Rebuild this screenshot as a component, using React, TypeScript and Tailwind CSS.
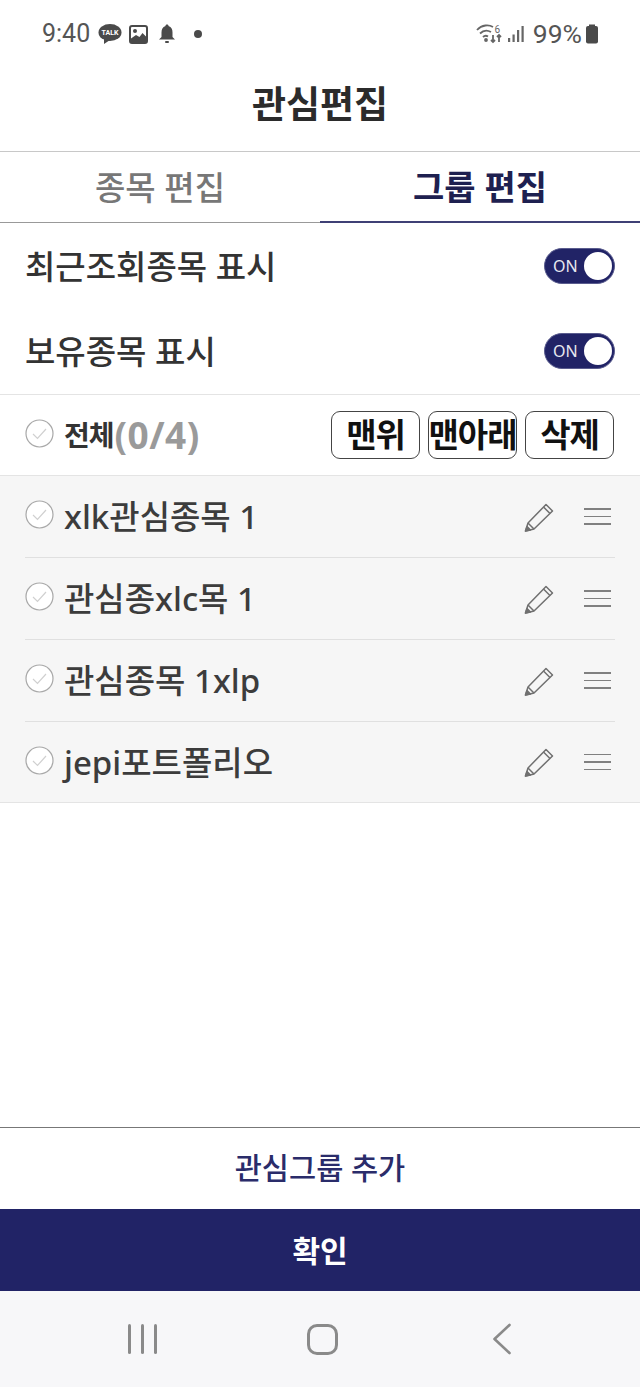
function Toggle() {
  return (
    <div className="-translate-y-[1px]">
      <div className="flex h-[36px] w-[71px] items-center justify-between rounded-full border border-[#5a5c8e] bg-[#212366] pl-[8px] pr-[2px]">
        <span className="text-[16px] leading-none text-[#e8e8f0]">ON</span>
        <span className="h-[28px] w-[28px] rounded-full bg-white"></span>
      </div>
    </div>
  );
}

function CheckCircle() {
  return (
    <svg width="29" height="29" viewBox="0 0 29 29" fill="none" className="-translate-y-[2px]">
      <circle cx="14.5" cy="14.5" r="13.5" stroke="#a8a8a8" strokeWidth="1.2" fill="#ffffff" />
      <path d="M8 15 L12.5 19.5 L21 10" stroke="#d0d0d0" strokeWidth="1.2" />
    </svg>
  );
}

function Pencil() {
  return (
    <svg width="30" height="30" viewBox="0 0 30 30" fill="none" stroke="#707070" strokeWidth="1.5" strokeLinejoin="round">
      <path d="M1.5 29 L4 21 L22 2.5 L28.5 9 L10 27 Z" />
      <path d="M4 21 L10 27" />
      <path d="M19.5 5 L26 11.5" />
      <path d="M1.5 29 L3 24.5 L6.5 28 Z" fill="#707070" />
    </svg>
  );
}

function Menu() {
  return (
    <div className="flex w-[27px] flex-col gap-[6px]">
      <div className="h-[1.5px] bg-[#808080]"></div>
      <div className="h-[1.5px] bg-[#808080]"></div>
      <div className="h-[1.5px] bg-[#808080]"></div>
    </div>
  );
}

function Btn({ label }: { label: string }) {
  return (
    <div className="flex h-[48px] w-[89px] items-center justify-center whitespace-nowrap rounded-[9px] border border-[#444] bg-white text-[33px] font-bold tracking-[-1px] text-[#111]">
      {label}
    </div>
  );
}

function GroupRow({ name, last }: { name: string; last?: boolean }) {
  return (
    <div className={`flex items-center justify-between ${last ? "h-[80px]" : "h-[82px] border-b border-[#e0e0e0]"}`}>
      <div className="flex items-center gap-[10px]">
        <CheckCircle />
        <span className="text-[33px] font-medium leading-none text-[#3c3c3c]">{name}</span>
      </div>
      <div className="flex items-center gap-[30px] pr-[4px]">
        <Pencil />
        <Menu />
      </div>
    </div>
  );
}

function StatusBar() {
  return (
    <div className="flex h-[63px] shrink-0 items-center justify-between pl-[42px] pr-[41px] pt-[5px] font-['Roboto',sans-serif] text-[25px] text-[#555]">
      <div className="flex items-center gap-[8px]">
        <span>9:40</span>
        <svg width="24" height="22" viewBox="0 0 24 22" fill="#4a4a4a">
          <ellipse cx="12" cy="9.5" rx="11.5" ry="8.5" />
          <path d="M6 15 L6 21 L12 17 Z" />
          <text x="12" y="12" fontSize="7" fontWeight="700" fill="#fff" textAnchor="middle" fontFamily="Roboto">TALK</text>
        </svg>
        <svg width="19" height="19" viewBox="0 0 19 19" className="-ml-px">
          <rect x="1" y="1" width="17" height="17" rx="2" fill="#fff" stroke="#4a4a4a" strokeWidth="2" />
          <circle cx="6" cy="6" r="2" fill="#4a4a4a" />
          <path d="M2 13.5 L7 10 L10.5 12 L13.5 8 L17 11.5 L17 17 L2 17 Z" fill="#4a4a4a" />
        </svg>
        <svg width="18" height="20" viewBox="0 0 18 20" fill="#4a4a4a" className="ml-[2px]">
          <path d="M9 0.5 C10 0.5 10.5 1 10.5 2 C13.5 3 14.5 5.5 14.5 8.5 L14.5 13 L17 15.5 L1 15.5 L3.5 13 L3.5 8.5 C3.5 5.5 4.5 3 7.5 2 C7.5 1 8 0.5 9 0.5 Z" />
          <rect x="7" y="17" width="4" height="2" rx="1" />
        </svg>
        <span className="ml-[10px] h-[8px] w-[8px] rounded-full bg-[#4a4a4a]"></span>
      </div>
      <div className="flex items-center">
        <svg width="26" height="20" viewBox="0 0 26 20" fill="none" stroke="#666" strokeWidth="1.8">
          <path d="M1 6 C6 0.5 13 0.5 17 3" />
          <path d="M4 9.5 C7.5 6 11.5 6 15 8" />
          <path d="M7 13 C8.5 11.5 10.5 11.5 12 12.5" />
          <circle cx="10" cy="16" r="1" fill="#666" />
          <path d="M17 11 L17 18 M15 16 L17 18 L19 16" />
          <path d="M23 18 L23 11 M21 13 L23 11 L25 13" />
          <text x="18.5" y="9" fontSize="10" fill="#666" stroke="none" fontFamily="Roboto">6</text>
        </svg>
        <svg width="17" height="18" viewBox="0 0 17 18" fill="#666" className="ml-[5px]">
          <rect x="1" y="13" width="2.2" height="4" />
          <rect x="5.5" y="9.5" width="2.2" height="7.5" />
          <rect x="10" y="5" width="2.2" height="12" />
          <rect x="14.5" y="1" width="2.2" height="16" />
        </svg>
        <span className="ml-[9px] text-[26.5px]">99%</span>
        <svg width="14" height="20" viewBox="0 0 14 20" fill="#4a4a4a" className="ml-[3px]">
          <rect x="4" y="0.5" width="6" height="3" />
          <rect x="1" y="2" width="12" height="17.5" rx="2" />
        </svg>
      </div>
    </div>
  );
}

export default function App() {
  return (
    <div className="flex h-[1387px] w-[640px] flex-col overflow-hidden bg-white font-['Noto_Sans','Noto_Sans_CJK_KR',sans-serif]">
      <StatusBar />

      <div className="flex h-[89px] shrink-0 items-center justify-center border-b border-[#c8c8c8] pb-[6px]">
        <h1 className="text-[37px] font-bold text-[#2b2b2b]">관심편집</h1>
      </div>

      <div className="flex h-[71px] shrink-0 border-b border-[#999]">
        <div className="flex flex-1 items-center justify-center pt-[2px] text-[33px] font-medium text-[#777]">종목 편집</div>
        <div className="relative -mb-px flex flex-1 items-center justify-center border-b-2 border-[#3f4075] pt-[2px] text-[34px] font-bold text-[#1e2050]">그룹 편집</div>
      </div>

      <div className="flex h-[172px] shrink-0 flex-col border-b border-[#e4e4e4] px-[25px] pt-[1px]">
        <div className="flex h-[85px] shrink-0 items-center justify-between">
          <span className="text-[33px] font-medium text-[#333]">최근조회종목 표시</span>
          <Toggle />
        </div>
        <div className="flex h-[85px] shrink-0 items-center justify-between">
          <span className="text-[33px] font-medium text-[#333]">보유종목 표시</span>
          <Toggle />
        </div>
      </div>

      <div className="flex h-[81px] shrink-0 items-center justify-between border-b border-[#e4e4e4] pl-[25px] pr-[26px]">
        <div className="flex items-center gap-[10px]">
          <CheckCircle />
          <span className="text-[28px] font-bold tracking-[-1px] text-[#333]">전체</span>
          <span className="-ml-[9px] text-[37px] font-bold tracking-[0.5px] text-[#9a9a9a]">(0/4)</span>
        </div>
        <div className="flex gap-[8px]">
          <Btn label="맨위" />
          <Btn label="맨아래" />
          <Btn label="삭제" />
        </div>
      </div>

      <div className="shrink-0 border-b border-[#e4e4e4] bg-[#f6f6f6] px-[25px]">
        <GroupRow name="xlk관심종목 1" />
        <GroupRow name="관심종xlc목 1" />
        <GroupRow name="관심종목 1xlp" />
        <GroupRow name="jepi포트폴리오" last />
      </div>

      <div className="flex-1"></div>

      <div className="flex h-[82px] shrink-0 items-center justify-center border-t border-[#777] text-[29.5px] font-medium text-[#2a2c6a]">
        관심그룹 추가
      </div>
      <div className="flex h-[82px] shrink-0 items-center justify-center bg-[#212366] text-[30px] font-bold text-white">확인</div>

      <div className="flex h-[96px] shrink-0 items-center bg-[#f7f7f9] pl-[128px]">
        <div className="flex gap-[10px]">
          <div className="h-[30px] w-[3px] rounded-full bg-[#8a8a8a]"></div>
          <div className="h-[30px] w-[3px] rounded-full bg-[#8a8a8a]"></div>
          <div className="h-[30px] w-[3px] rounded-full bg-[#8a8a8a]"></div>
        </div>
        <div className="ml-[150px] h-[31px] w-[31px] rounded-[10px] border-[3px] border-[#8a8a8a]"></div>
        <svg width="18" height="32" viewBox="0 0 18 32" fill="none" stroke="#8a8a8a" strokeWidth="2.6" strokeLinecap="round" strokeLinejoin="round" className="ml-[155px]">
          <path d="M16.5 2 L1.5 16 L16.5 30" />
        </svg>
      </div>
    </div>
  );
}
